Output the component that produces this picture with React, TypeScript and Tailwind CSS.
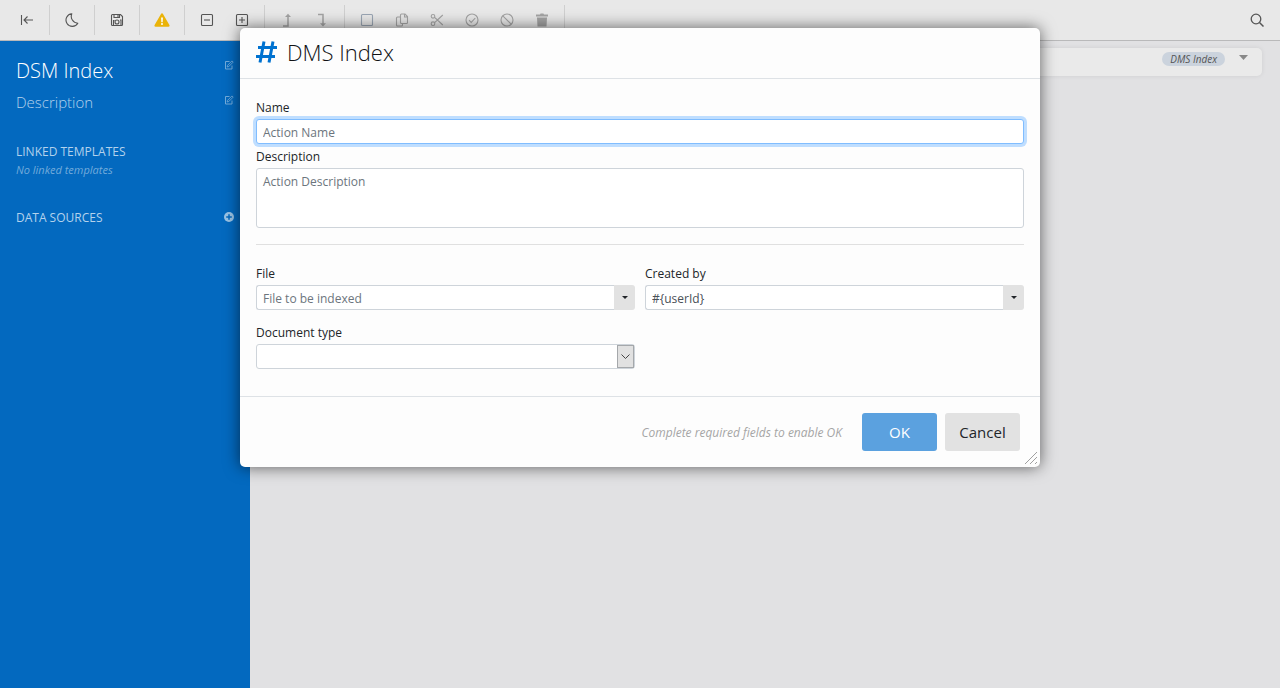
import type { ReactNode } from 'react';

function Icon({ children, size = 14 }: { children: ReactNode; size?: number }) {
  return (
    <svg width={size} height={size} viewBox="0 0 14 14" fill="none" stroke="currentColor" strokeWidth="1.1" aria-hidden="true">
      {children}
    </svg>
  );
}

const warning = (
  <svg width="16" height="14" viewBox="0 0 16 14" aria-hidden="true">
    <path d="M8 .3c.5 0 .8.2 1 .6l6.4 11.2c.5.9 0 1.6-1 1.6H1.600c-1 0-1.500-.7-1-1.600L7 .9c.2-.4.5-.6 1-.6z" fill="#eab308" />
    <path d="M7.100 4.500h1.800l-.25 4.700h-1.300z" fill="#fff" />
    <circle cx="8" cy="11" r="1" fill="#fff" />
  </svg>
);

type Tool = { label: string; icon: ReactNode; disabled?: boolean };

const groups: Tool[][] = [
  [{ label: 'Back', icon: <Icon><path d="M1.500 2v10M13 7H4M7.500 3.500L4 7l3.500 3.500" /></Icon> }],
  [{ label: 'Dark mode', icon: <Icon><path d="M6.800 .8A6.300 6.300 0 1 0 12.800 10.200A6.800 6.800 0 0 1 6.800 .8z" strokeLinejoin="round" /></Icon> }],
  [{
    label: 'Save',
    icon: <Icon><path d="M1.500 2.500a1 1 0 0 1 1-1h8l2 2v8a1 1 0 0 1-1 1h-9a1 1 0 0 1-1-1zM4 1.500v3h5.500v-3M8 2v2M3.500 12.500V7.500h1" /><circle cx="7" cy="9" r="2" /><path d="M10 7h1v5.500" /></Icon>,
  }],
  [{ label: 'Warnings', icon: warning }],
  [
    { label: 'Collapse', icon: <Icon><rect x="1.500" y="1.500" width="11" height="11" rx="1" /><path d="M4 7h6" /></Icon> },
    { label: 'Expand', icon: <Icon><rect x="1.500" y="1.500" width="11" height="11" rx="1" /><path d="M4 7h6M7 4v6" /></Icon> },
  ],
  [
    { label: 'Move up', disabled: true, icon: <Icon><path d="M3 13h5V3" strokeWidth="1.500" /><path d="M8 .8l3 3.200H5z" fill="currentColor" stroke="none" /></Icon> },
    { label: 'Move down', disabled: true, icon: <Icon><path d="M3 1.500h5V11" strokeWidth="1.500" /><path d="M8 13.500l3-3.200H5z" fill="currentColor" stroke="none" /></Icon> },
  ],
  [
    { label: 'Select', disabled: true, icon: <Icon><rect x="1.500" y="1.500" width="11" height="11" rx="1" stroke="#9aa5b3" /></Icon> },
    { label: 'Copy', disabled: true, icon: <Icon><path d="M5.500 2a1 1 0 0 1 1-1h3.500l2.500 2.500V9.500a1 1 0 0 1-1 1h-5a1 1 0 0 1-1-1zM9.500 1.500v2.500h2.500M5 4H2.500a1 1 0 0 0-1 1v7a1 1 0 0 0 1 1h4a1 1 0 0 0 1-1v-1" /></Icon> },
    { label: 'Cut', disabled: true, icon: <Icon><circle cx="3" cy="3.300" r="1.800" /><circle cx="3" cy="10.700" r="1.800" /><path d="M4.600 4.300L12.800 12M4.600 9.700L12.800 2" /></Icon> },
    { label: 'Enable', disabled: true, icon: <Icon><circle cx="7" cy="7" r="6" /><path d="M4 7.200l2.200 2.200L10.300 5" /></Icon> },
    { label: 'Disable', disabled: true, icon: <Icon><circle cx="7" cy="7" r="6" /><path d="M2.800 2.800l8.400 8.400" /></Icon> },
    { label: 'Delete', disabled: true, icon: <Icon><path d="M1 1.500h4l.6-1h2.800l.6 1h4v2H1zM2 4.500h10l-.5 9H2.500z" fill="currentColor" stroke="none" /></Icon> },
  ],
];

function Toolbar() {
  return (
    <header className="flex h-[41px] items-center border-b border-[#b9b9ba] bg-[#e8e8e8] pr-1.5 pl-[5px] text-[#555]">
      {groups.map((tools, i) => (
        <div key={i} className="flex h-[30px] border-r border-[#cfcfcf] pr-[5px] pl-1">
          {tools.map((t) => (
            <button key={t.label} type="button" aria-label={t.label} disabled={t.disabled} className="flex w-[35px] items-center justify-center disabled:text-[#a3a3a3]">
              {t.icon}
            </button>
          ))}
        </div>
      ))}
      <button type="button" aria-label="Search" className="ml-auto flex h-[30px] w-[35px] items-center justify-center">
        <Icon><circle cx="6" cy="6" r="4.800" strokeWidth="1.300" /><path d="M9.500 9.500l4 4" strokeWidth="1.500" /></Icon>
      </button>
    </header>
  );
}

function EditButton({ label }: { label: string }) {
  return (
    <button type="button" aria-label={label} className="mt-[3px] text-[#72abdb]">
      <svg className="block" width="10" height="10" viewBox="0 0 10 10" fill="none" stroke="currentColor" aria-hidden="true">
        <path d="M5.500 1.500h-4v7.500h6.500V5.500" />
        <path d="M3.200 7l.4-1.700L8 .9l1.200 1.200L4.800 6.500z" strokeWidth=".9" />
      </svg>
    </button>
  );
}

function Sidebar() {
  return (
    <aside className="w-[250px] shrink-0 bg-[#0369bf] pt-4 pr-4 pl-4 text-[#b3d2ec]">
      <div className="flex items-start justify-between">
        <h1 className="text-[20px] leading-7 font-light text-white">DSM Index</h1>
        <EditButton label="Edit name" />
      </div>
      <div className="mt-[7px] flex items-start justify-between">
        <p className="text-[15px] leading-5 font-light">Description</p>
        <EditButton label="Edit description" />
      </div>
      <h2 className="mt-[31px] text-[12px] leading-[18px]">LINKED TEMPLATES</h2>
      <p className="text-[11px] leading-[18px] text-[#72abdb] italic">No linked templates</p>
      <div className="mt-[30px] flex items-start justify-between">
        <h2 className="text-[12px] leading-[18px]">DATA SOURCES</h2>
        <button type="button" aria-label="Add data source" className="mt-[3px] text-[#9ac3e5]">
          <svg className="block" width="10" height="10" viewBox="0 0 10 10" aria-hidden="true">
            <circle cx="5" cy="5" r="5" fill="currentColor" />
            <path d="M5 2.200v5.600M2.200 5h5.600" stroke="#0369bf" strokeWidth="1.500" />
          </svg>
        </button>
      </div>
    </aside>
  );
}

const field = 'w-full border bg-white px-1.5 text-[12px] text-[#495057] placeholder:text-[#6c757d] outline-none';
const label = 'block pt-0.5 text-[12px] leading-[22px] text-[#212529]';

function ComboField({ id, text, placeholder, value }: { id: string; text: string; placeholder?: string; value?: string }) {
  return (
    <div>
      <label htmlFor={id} className={label}>{text}</label>
      <div className="flex h-[25px]">
        <input id={id} placeholder={placeholder} defaultValue={value} className={`${field} min-w-0 flex-1 rounded-l-[3px] border-r-0 border-[#ced4da] pt-0.5`} />
        <button type="button" aria-label={`${text} options`} className="flex w-[21px] items-center justify-center rounded-r-[3px] bg-[#e2e2e2]">
          <svg width="6" height="3" viewBox="0 0 6 3" aria-hidden="true"><path d="M0 0h6L3 3z" fill="#212529" /></svg>
        </button>
      </div>
    </div>
  );
}

function IndexDialog() {
  return (
    <section role="dialog" aria-labelledby="dialog-title" className="relative w-full max-w-[800px] rounded-[5px] bg-[#fdfdfd] shadow-[0_0_16px_rgba(0,0,0,0.6)]">
      <header className="flex h-[51px] items-center gap-2.5 border-b border-[#dee2e6] px-4 pb-0.5">
        <svg width="21" height="22" viewBox="0 0 21 22" fill="none" stroke="#0072d0" strokeWidth="3" aria-hidden="true">
          <path d="M8 .5L4 21.500M17 .5L13 21.500M2 6.500h19M0 15.500h19" />
        </svg>
        <h2 id="dialog-title" className="text-[22px] leading-8 font-light text-[#101214]">DMS Index</h2>
      </header>
      <form>
        <div className="px-4 pt-4 pb-[27px]">
          <label htmlFor="name" className={label}>Name</label>
          <input id="name" placeholder="Action Name" className={`${field} block h-[25px] rounded-[3px] border-[#80bdff] pt-0.5 shadow-[0_0_0_3px_#bfdeff]`} />
          <label htmlFor="description" className={label}>Description</label>
          <textarea id="description" placeholder="Action Description" className={`${field} block h-[60px] resize-none rounded-[3px] border-[#ced4da] py-1 leading-[18px]`} />
          <hr className="my-4 border-[#e0e0e0]" />
          <div className="grid grid-cols-2 gap-2.5">
            <ComboField id="file" text="File" placeholder="File to be indexed" />
            <ComboField id="created-by" text="Created by" value="#{userId}" />
            <div>
              <label htmlFor="document-type" className={label}>Document type</label>
              <div className="relative">
                <select id="document-type" className={`${field} block h-[25px] appearance-none rounded-[3px] border-[#ced4da]`}>
                  <option></option>
                </select>
                <span className="pointer-events-none absolute inset-y-px right-px flex w-[17px] items-center justify-center border border-[#a5a8ab] bg-[#e1e1e1]">
                  <svg width="9" height="5" viewBox="0 0 9 5" fill="none" stroke="#444" aria-hidden="true"><path d="M.5 .5l4 4 4-4" /></svg>
                </span>
              </div>
            </div>
          </div>
        </div>
        <footer className="flex items-center justify-end gap-2 border-t border-[#dee2e6] py-4 pr-5 pl-4">
          <p className="mr-3 pt-0.5 text-[12px] leading-[18px] text-[#a5a5a5] italic">Complete required fields to enable OK</p>
          <button type="submit" disabled className="h-[38px] w-[75px] rounded-[3px] bg-[#5ba1df] text-[15px] text-white">OK</button>
          <button type="button" className="h-[38px] w-[75px] rounded-[3px] bg-[#e2e2e2] text-[15px] text-[#212529]">Cancel</button>
        </footer>
      </form>
      <svg className="absolute right-[3px] bottom-[3px]" width="12" height="12" viewBox="0 0 12 12" stroke="#a0a0a0" aria-hidden="true">
        <path d="M0 12L12 0M5 12l7-7M10 12l2-2" />
      </svg>
    </section>
  );
}

export default function App() {
  return (
    <div className="relative flex min-h-screen flex-col bg-[#e1e1e3] font-['Open_Sans','Noto_Sans',sans-serif]">
      <Toolbar />
      <div className="flex flex-1">
        <Sidebar />
        <main className="flex-1 py-[7px] pr-[18px] pl-4">
          <div className="flex h-7 items-start justify-end gap-[11px] rounded-[5px] bg-[#eaeaea] pt-1 pr-[11px] shadow-[0_0_5px_rgba(0,0,0,0.08)]">
            <span className="rounded-full bg-[#cbd3dd] px-2 text-[10px] leading-[14px] text-[#555] italic">DMS Index</span>
            <button type="button" aria-label="Expand row" className="p-[3px] text-[#888]">
              <svg className="block" width="9" height="5" viewBox="0 0 9 5" aria-hidden="true"><path d="M0 0h9L4.500 5z" fill="currentColor" /></svg>
            </button>
          </div>
        </main>
      </div>
      <div className="absolute inset-0 flex items-start justify-center pt-7">
        <IndexDialog />
      </div>
    </div>
  );
}
